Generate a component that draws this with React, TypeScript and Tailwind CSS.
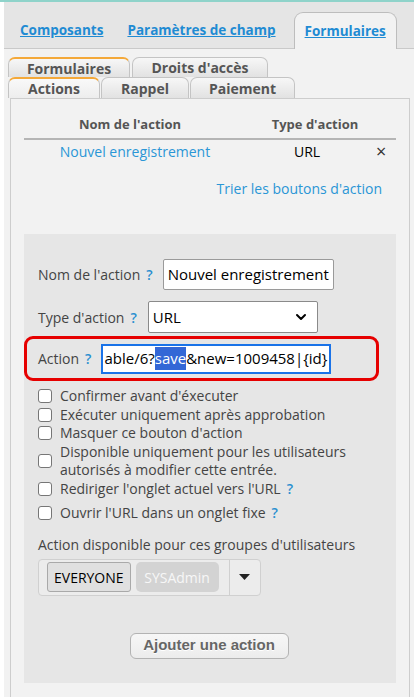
import { ChevronDown } from "lucide-react";

const blue = "text-[#1f8bd3]";

function Help() {
  return <span className="ml-[6px] font-semibold text-[#2a8fd0]">?</span>;
}

function Check({ children, className = "" }: { children: React.ReactNode; className?: string }) {
  return (
    <div className={`flex items-center gap-[8px] ${className}`}>
      <span className="size-[14px] shrink-0 rounded-[3px] border border-[#767676] bg-white" />
      <span className="leading-[18.5px]">{children}</span>
    </div>
  );
}

export default function App() {
  return (
    <div className="h-[697px] w-[414px] overflow-hidden border-t-2 border-[#8fd3ca] bg-white font-['Open_Sans',sans-serif] text-[14px] text-[#444]">
      <div className="ml-[4px] h-full bg-[#f2f2f2]">
        {/* top tabs */}
        <div className="flex h-[47px] items-end gap-[4px] border-b border-[#c9c9c9] bg-[#e5e5e5] pl-[6px] text-[13.5px]">
          <a className={`flex h-[36px] items-center px-[10px] font-bold underline ${blue}`}>Composants</a>
          <a className={`flex h-[36px] items-center px-[10px] font-bold underline ${blue}`}>Paramètres de champ</a>
          <a className={`-mb-px ml-[4px] flex h-[37px] items-center rounded-t-[9px] border border-b-0 border-[#bdbdbd] bg-[#f2f2f2] px-[10px] font-bold underline ${blue}`}>
            Formulaires
          </a>
        </div>

        {/* sub tabs */}
        <div className="mt-[8px] ml-[4px] text-[14px] font-bold text-[#555]">
          <div className="flex h-[20px] gap-[2px]">
            <div className="flex w-[122px] items-center justify-center rounded-t-[7px] border border-b-0 border-t-2 border-[#c4c4c4] border-t-[#f4a93a] bg-gradient-to-b from-[#f7f7f7] to-[#e2e2e2]">
              Formulaires
            </div>
            <div className="flex w-[136px] items-center justify-center rounded-t-[7px] border border-b-0 border-[#c4c4c4] bg-gradient-to-b from-[#f7f7f7] to-[#e2e2e2]">
              Droits d'accès
            </div>
          </div>
          <div className="flex h-[21px] gap-[1px]">
            <div className="flex w-[92px] items-center justify-center rounded-t-[7px] border border-b-0 border-t-2 border-[#c4c4c4] border-t-[#f4a93a] bg-gradient-to-b from-[#f9f9f9] to-[#ededed]">
              Actions
            </div>
            <div className="flex w-[88px] items-center justify-center rounded-t-[7px] border border-b-0 border-[#c4c4c4] bg-gradient-to-b from-[#f7f7f7] to-[#e2e2e2]">
              Rappel
            </div>
            <div className="flex w-[105px] items-center justify-center rounded-t-[7px] border border-b-0 border-[#c4c4c4] bg-gradient-to-b from-[#f7f7f7] to-[#e2e2e2]">
              Paiement
            </div>
          </div>
        </div>

        {/* panel */}
        <div className="ml-[6px] h-[610px] w-[400px] border border-[#cdcdcd] bg-[#f2f2f2]">
          <div className="mx-[13px] pt-[16px]">
            <div className="flex h-[20px] items-center text-[13px] font-bold text-[#555]">
              <div className="w-[212px] text-center">Nom de l'action</div>
              <div className="w-[142px] pl-[16px] text-center">Type d'action</div>
            </div>
            <div className="mt-[3px] h-[2px] bg-[#b5b5b5]" />
            <div className="mt-[1px] flex h-[20px] items-center">
              <div className="w-[212px] pl-[10px] text-center text-[#2a96d6]">Nouvel enregistrement</div>
              <div className="w-[142px] text-center text-black">URL</div>
              <div className="-ml-[2px] text-[18px] leading-none text-[#333]">×</div>
            </div>
          </div>
          <div className="mt-[17px] mr-[27px] h-[20px] text-right text-[#2a96d6]">Trier les boutons d'action</div>

          {/* form */}
          <div className="mx-[13px] mt-[36px] h-[449px] bg-[#e6e6e6] pt-[25px] text-[#444]">
            <div className="flex items-center px-[14px]">
              <span>Nom de l'action</span>
              <Help />
              <div className="ml-[10px] flex h-[31px] w-[171px] items-center overflow-hidden whitespace-nowrap rounded-[2px] border border-[#9a9a9a] bg-white pl-[4px] text-[15px] text-black">
                Nouvel enregistrement
              </div>
            </div>
            <div className="mt-[11px] flex items-center px-[14px]">
              <span>Type d'action</span>
              <Help />
              <div className="ml-[11px] flex h-[32px] w-[170px] items-center justify-between rounded-[2px] border border-[#8a8a8a] bg-white pl-[4px] pr-[8px] text-[15px] text-black">
                URL
                <ChevronDown size={16} strokeWidth={3} className="text-black" />
              </div>
            </div>
            <div className="mt-[3px] flex h-[45px] w-[355px] items-center rounded-[9px] border-[3px] border-[#e60000] pl-[11px]">
              <span>Action</span>
              <Help />
              <div className="ml-[11px] flex h-[28px] w-[228px] items-center overflow-hidden whitespace-nowrap border border-[#1a73e8] bg-white pl-[1px] text-[15px] text-black outline outline-1 outline-[#1a73e8]">
                able/6?<span className="bg-[#3367d6] text-white">save</span>&amp;new=1009458|{"{id}"}
              </div>
            </div>

            <div className="mt-[6px] px-[14px]">
              <Check>Confirmer avant d'éxecuter</Check>
              <Check>Exécuter uniquement après approbation</Check>
              <Check>Masquer ce bouton d'action</Check>
              <Check>
                Disponible uniquement pour les utilisateurs
                <br />
                autorisés à modifier cette entrée.
              </Check>
              <Check>
                Rediriger l'onglet actuel vers l'URL
                <Help />
              </Check>
              <Check className="mt-[6px]">
                Ouvrir l'URL dans un onglet fixe
                <Help />
              </Check>
            </div>

            <div className="mt-[12px] px-[14px] leading-[20px]">Action disponible pour ces groupes d'utilisateurs</div>
            <div className="ml-[14px] mt-[4px] flex h-[37px] w-[223px] items-center rounded-[4px] border border-[#d0d0d0] bg-[#ececec]">
              <div className="ml-[8px] flex h-[30px] items-center rounded-[3px] border border-[#a9a9a9] bg-[#e0e0e0] px-[6px] text-black">
                EVERYONE
              </div>
              <div className="ml-[5px] flex h-[30px] w-[83px] items-center justify-center rounded-[5px] bg-[#d3d3d3] text-[#f7f7f7]">
                SYSAdmin
              </div>
              <div className="ml-[10px] flex h-full flex-1 items-center justify-center border-l border-[#d0d0d0]">
                <svg width="11" height="6" viewBox="0 0 11 6">
                  <path d="M0 0h11L5.5 6z" fill="#222" />
                </svg>
              </div>
            </div>

            <div className="mt-[37px] flex justify-center">
              <div className="-ml-[2px] flex h-[26px] w-[159px] items-center justify-center rounded-[6px] border border-[#b3b3b3] bg-gradient-to-b from-[#f7f7f7] to-[#ececec] font-['Liberation_Sans',sans-serif] text-[15px] font-bold text-[#666] [text-shadow:0_1px_0_#fff]">
                Ajouter une action
              </div>
            </div>
          </div>
        </div>
      </div>
    </div>
  );
}
